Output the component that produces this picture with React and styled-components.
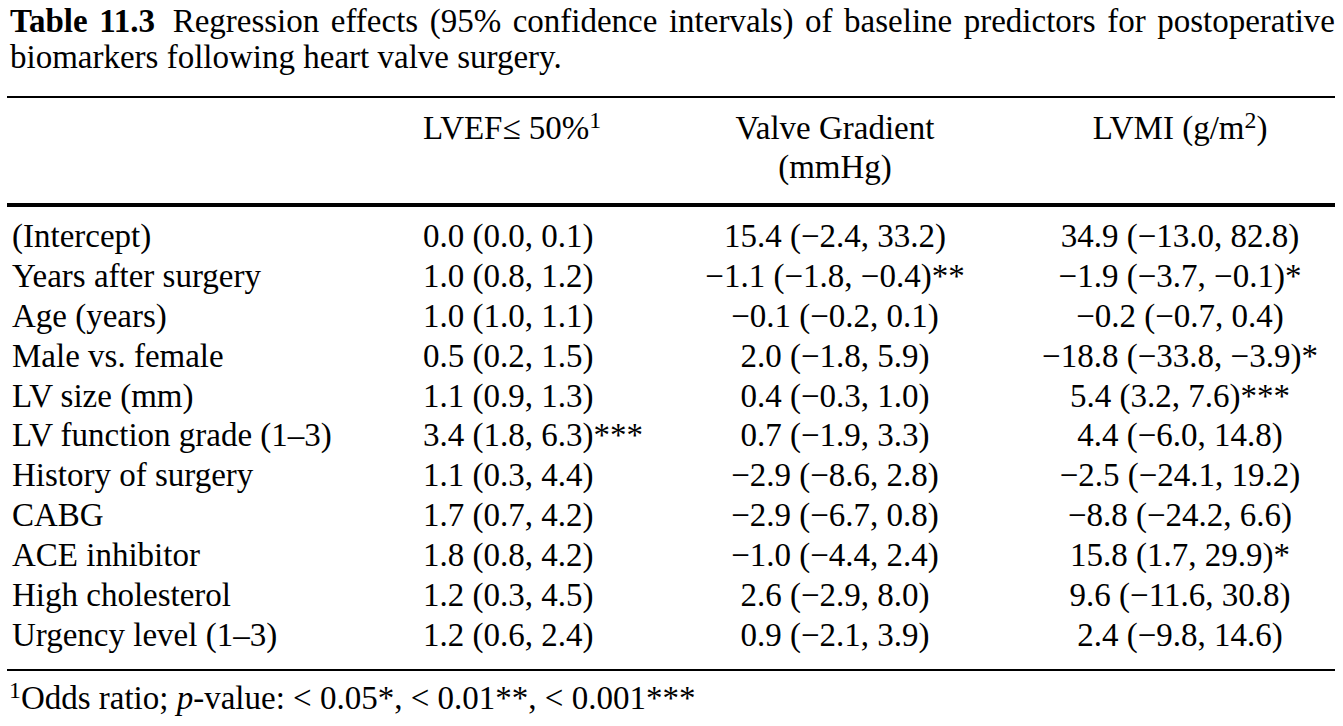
import React from "react";
import styled, { createGlobalStyle } from "styled-components";

const GlobalStyle = createGlobalStyle`
  html, body {
    margin: 0;
    padding: 0;
    background: #ffffff;
  }
  body {
    color: #000000;
    font-family: "Liberation Serif", "Times New Roman", serif;
    font-size: 33px;
  }
`;

const COLS = "406px 232px 380px 310px";

const Page = styled.div`
  width: 1328px;
  padding: 3px 8px 0 7px;
`;

const Caption = styled.p`
  margin: 0;
  padding-left: 3px;
  font-size: 33px;
  line-height: 36px;
  text-align: justify;
  text-align-last: left;
`;

const CaptionLabel = styled.span`
  font-weight: 700;
  padding-right: 6px;
`;

const TableBox = styled.div`
  margin-top: 21px;
  border-top: 2px solid #000;
  border-bottom: 2px solid #000;
`;

const HeaderRow = styled.div`
  display: grid;
  grid-template-columns: ${COLS};
  padding: 11px 0 16px;
  border-bottom: 4px solid #000;
  line-height: 39px;
`;

const Body = styled.div`
  padding: 10px 0 13px;
`;

const Row = styled.div`
  display: grid;
  grid-template-columns: ${COLS};
  height: 39.9px;
  line-height: 39.9px;
  white-space: nowrap;
`;

const Cell = styled.div`
  padding-left: ${(p) => (p.$align === "left" ? p.$pad : 0)}px;
  text-align: ${(p) => (p.$align === "left" ? "left" : "center")};
  white-space: nowrap;
`;

const Sup = styled.sup`
  font-size: 0.72em;
  vertical-align: 0.45em;
  line-height: 0;
`;

const Italic = styled.i`
  font-style: italic;
`;

const Footnote = styled.p`
  margin: 9px 0 0;
  padding-left: 2px;
  font-size: 33px;
  line-height: 36px;
  white-space: nowrap;
`;

const rows = [
  ["(Intercept)", "0.0 (0.0, 0.1)", "15.4 (−2.4, 33.2)", "34.9 (−13.0, 82.8)"],
  ["Years after surgery", "1.0 (0.8, 1.2)", "−1.1 (−1.8, −0.4)**", "−1.9 (−3.7, −0.1)*"],
  ["Age (years)", "1.0 (1.0, 1.1)", "−0.1 (−0.2, 0.1)", "−0.2 (−0.7, 0.4)"],
  ["Male vs. female", "0.5 (0.2, 1.5)", "2.0 (−1.8, 5.9)", "−18.8 (−33.8, −3.9)*"],
  ["LV size (mm)", "1.1 (0.9, 1.3)", "0.4 (−0.3, 1.0)", "5.4 (3.2, 7.6)***"],
  ["LV function grade (1–3)", "3.4 (1.8, 6.3)***", "0.7 (−1.9, 3.3)", "4.4 (−6.0, 14.8)"],
  ["History of surgery", "1.1 (0.3, 4.4)", "−2.9 (−8.6, 2.8)", "−2.5 (−24.1, 19.2)"],
  ["CABG", "1.7 (0.7, 4.2)", "−2.9 (−6.7, 0.8)", "−8.8 (−24.2, 6.6)"],
  ["ACE inhibitor", "1.8 (0.8, 4.2)", "−1.0 (−4.4, 2.4)", "15.8 (1.7, 29.9)*"],
  ["High cholesterol", "1.2 (0.3, 4.5)", "2.6 (−2.9, 8.0)", "9.6 (−11.6, 30.8)"],
  ["Urgency level (1–3)", "1.2 (0.6, 2.4)", "0.9 (−2.1, 3.9)", "2.4 (−9.8, 14.6)"],
];

export default function App() {
  return (
    <>
      <GlobalStyle />
      <Page>
        <Caption>
          <CaptionLabel>Table 11.3</CaptionLabel> Regression effects (95% confidence intervals) of
          baseline predictors for postoperative biomarkers following heart valve surgery.
        </Caption>
        <TableBox>
          <HeaderRow>
            <Cell $align="left" $pad={5}></Cell>
            <Cell $align="left" $pad={10}>
              LVEF≤ 50%<Sup>1</Sup>
            </Cell>
            <Cell>
              Valve Gradient
              <br />
              (mmHg)
            </Cell>
            <Cell>
              LVMI (g/m<Sup>2</Sup>)
            </Cell>
          </HeaderRow>
          <Body>
            {rows.map((r) => (
              <Row key={r[0]}>
                <Cell $align="left" $pad={5}>{r[0]}</Cell>
                <Cell $align="left" $pad={10}>{r[1]}</Cell>
                <Cell>{r[2]}</Cell>
                <Cell>{r[3]}</Cell>
              </Row>
            ))}
          </Body>
        </TableBox>
        <Footnote>
          <Sup>1</Sup>Odds ratio; <Italic>p</Italic>-value: &lt; 0.05*, &lt; 0.01**, &lt; 0.001***
        </Footnote>
      </Page>
    </>
  );
}
